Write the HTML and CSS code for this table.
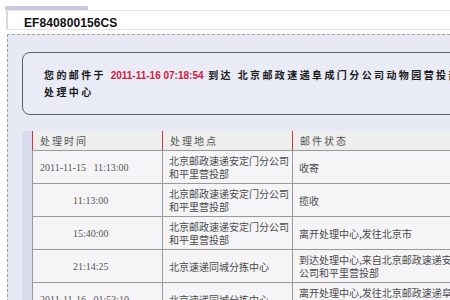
FILE: index.html
```html
<!DOCTYPE html>
<html lang="zh-CN">
<head>
<meta charset="utf-8">
<title>邮件跟踪查询</title>
<link rel="stylesheet" href="styles.css">
</head>
<body>
  <div class="tabbar">
    <div class="tab-accent"></div>
    <div class="tab"><span class="mail-no">EF840800156CS</span></div>
  </div>

  <div class="panel">
    <div class="notice">
      <p class="notice-text">您的邮件于 <span class="stamp">2011-11-16 07:18:54</span> 到达 北京邮政速递阜成门分公司动物园营投部处理中心</p>
    </div>

    <div class="track-wrap">
      <table class="track">
        <colgroup>
          <col class="c-time">
          <col class="c-place">
          <col class="c-state">
        </colgroup>
        <thead>
          <tr>
            <th>处理时间</th>
            <th>处理地点</th>
            <th>邮件状态</th>
          </tr>
        </thead>
        <tbody>
          <tr>
            <td class="time">2011-11-15&nbsp;&nbsp;&nbsp;11:13:00</td>
            <td class="place">北京邮政速递安定门分公司和平里营投部</td>
            <td>收寄</td>
          </tr>
          <tr>
            <td class="time same-day">11:13:00</td>
            <td class="place">北京邮政速递安定门分公司和平里营投部</td>
            <td>揽收</td>
          </tr>
          <tr>
            <td class="time same-day">15:40:00</td>
            <td class="place">北京邮政速递安定门分公司和平里营投部</td>
            <td>离开处理中心,发往北京市</td>
          </tr>
          <tr>
            <td class="time same-day">21:14:25</td>
            <td class="place">北京速递同城分拣中心</td>
            <td>到达处理中心,来自北京邮政速递安定门分公司和平里营投部</td>
          </tr>
          <tr>
            <td class="time">2011-11-16&nbsp;&nbsp;&nbsp;01:53:10</td>
            <td class="place">北京速递同城分拣中心</td>
            <td>离开处理中心,发往北京邮政速递阜成门分公司动物园营投部</td>
          </tr>
          <tr>
            <td class="time same-day">07:18:54</td>
            <td class="place">北京邮政速递阜成门分公司动物园营投部</td>
            <td>到达处理中心,来自北京速递同城分拣中心</td>
          </tr>
        </tbody>
      </table>
    </div>
  </div>
</body>
</html>
```

FILE: styles.css
```css
html, body {
  margin: 0;
  padding: 0;
  background: #ffffff;
  overflow: hidden;
}

body {
  width: 640px;
  height: 300px;
  font-family: "Noto Sans CJK SC", "Liberation Sans", sans-serif;
}

/* top tab with the mail number */
.tabbar {
  padding: 6px 0 0 5px;
}

.tab-accent {
  width: 83px;
  height: 4px;
  background: #c8cbdc;
}

.tab {
  margin-left: 1px;
  height: 18px;
  border-top: 1px solid #e6e6e6;
  border-bottom: 1px solid #e2e2e2;
  border-left: 2px solid #d8d8d8;
  background: #ffffff;
  padding-left: 16px;
  line-height: 18px;
}

.mail-no {
  font-family: "Liberation Sans", Arial, sans-serif;
  font-size: 12px;
  font-weight: bold;
  color: #111111;
  letter-spacing: 0.1px;
}

/* dashed content panel */
.panel {
  margin: 4px 0 0 7px;
  border-top: 1px dashed #a0a0a8;
  border-left: 1px dashed #a0a0a8;
  background: #e7e9f5;
  height: 300px;
  padding: 17px 0 0 14px;
}

.notice {
  width: 460px;
  border: 1px solid #5e5e66;
  border-radius: 8px 0 0 8px;
  padding: 14px 0 14px 21px;
  background: #e9ebf6;
}

.notice-text {
  margin: 0;
  width: 420px;
  font-size: 10px;
  font-weight: bold;
  line-height: 16px;
  letter-spacing: 2.4px;
  color: #1a1a1a;
}

.stamp {
  font-family: "Liberation Sans", Arial, sans-serif;
  letter-spacing: 0;
  color: #cc2040;
}

/* tracking table */
.track-wrap {
  margin-top: 16px;
  border-left: 10px solid #d9dcee;
  width: 600px;
}

.track {
  border-collapse: collapse;
  table-layout: fixed;
  width: 461px;
}

.c-time { width: 130px; }
.c-place { width: 130px; }
.c-state { width: 201px; }

.track th {
  height: 19px;
  padding: 0 0 0 7px;
  text-align: left;
  font-weight: normal;
  font-size: 10px;
  letter-spacing: 2px;
  color: #555555;
  background: #eeeeee;
  border-left: 1px solid #d03a3a;
  border-bottom: 1px solid #9a9a9a;
}

.track td {
  height: 32px;
  padding: 0 4px 0 6px;
  font-size: 10px;
  line-height: 13px;
  color: #4a4a4a;
  background: #f5f5f8;
  border-left: 1px solid #9a9a9a;
  border-bottom: 1px solid #9a9a9a;
  vertical-align: middle;
}

.track td.place {
  padding-right: 0;
}

.track td.time {
  font-family: "Liberation Serif", "Times New Roman", serif;
  padding-left: 7px;
  color: #555555;
  white-space: nowrap;
}

.track td.same-day {
  padding-left: 40px;
}
```
